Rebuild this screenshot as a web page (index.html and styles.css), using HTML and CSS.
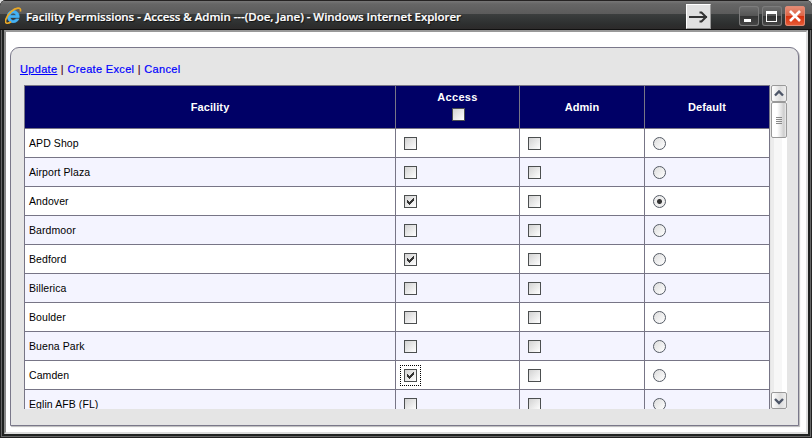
FILE: index.html
```
<!DOCTYPE html>
<html lang="en">
<head>
<meta charset="utf-8">
<title>Facility Permissions</title>
<link rel="stylesheet" href="styles.css">
</head>
<body>
<div class="window">
  <header class="titlebar">
    <svg class="ie" width="18" height="18" viewBox="0 0 18 18">
      <path d="M14.2 10.5H5.400c.2 3.200 4 3.800 5.200 1.400h3.300C11.500 17.800 2.300 16.500 2.300 9.400 2.300 1.300 14.900 1.300 14.200 10.500zM5.500 8.200h5.400C10.500 5.200 6 5.200 5.500 8.200z" fill="#45b2f5" stroke="#45b2f5" stroke-width=".7"/>
      <path d="M15.300 4.600C16.800-.6 10.500.5 6.200 4.700 1.500 9.300-.8 14.700 1.300 16c1.200.7 3.200-.2 4.800-1.300" fill="none" stroke="#e8a827" stroke-width="1.700"/>
    </svg>
    <h1>Facility Permissions - Access &amp; Admin ---(Doe, Jane) - Windows Internet Explorer</h1>
    <div class="arrow"><svg width="21" height="21" viewBox="0 0 21 21"><path d="M1 11h18M11.500 6.500h2l4.500 4.500-4.500 4.500h-2" fill="none" stroke="#333" stroke-width="2"/></svg></div>
    <div class="ctl"><svg width="20" height="20"><path d="M5 13h7v3H5z" fill="#fff"/></svg></div>
    <div class="ctl"><svg width="20" height="20"><path d="M4 5h11v11H4zM5 8v7h9V8z" fill="#fff" fill-rule="evenodd"/></svg></div>
    <div class="ctl close"><svg width="20" height="20"><path d="M5 5l10 10M15 5L5 15" stroke="#fff" stroke-width="2.600"/></svg></div>
  </header>
  <main class="client">
    <section class="panel">
      <nav class="links"><a class="on">Update</a> | <a>Create Excel</a> | <a>Cancel</a></nav>
      <div class="scroller">
        <table>
          <colgroup><col class="c1"><col class="c2"><col class="c3"><col class="c4"></colgroup>
          <thead><tr><th>Facility</th><th><span class="access">Access</span><i class="box"></i></th><th>Admin</th><th>Default</th></tr></thead>
          <tbody>
            <tr><td>APD Shop</td><td><i class="box"></i></td><td><i class="box"></i></td><td><i class="radio"></i></td></tr>
            <tr><td>Airport Plaza</td><td><i class="box"></i></td><td><i class="box"></i></td><td><i class="radio"></i></td></tr>
            <tr><td>Andover</td><td><i class="box"><svg width="11" height="11"><path class="tick" d="M2 4h1v1h1v1h1V5h1V4h1V3h1V2h1v3H8v1H7v1H6v1H5v1H4V8H3V7H2z"/></svg></i></td><td><i class="box"></i></td><td><i class="radio dot"></i></td></tr>
            <tr><td>Bardmoor</td><td><i class="box"></i></td><td><i class="box"></i></td><td><i class="radio"></i></td></tr>
            <tr><td>Bedford</td><td><i class="box"><svg width="11" height="11"><path class="tick" d="M2 4h1v1h1v1h1V5h1V4h1V3h1V2h1v3H8v1H7v1H6v1H5v1H4V8H3V7H2z"/></svg></i></td><td><i class="box"></i></td><td><i class="radio"></i></td></tr>
            <tr><td>Billerica</td><td><i class="box"></i></td><td><i class="box"></i></td><td><i class="radio"></i></td></tr>
            <tr><td>Boulder</td><td><i class="box"></i></td><td><i class="box"></i></td><td><i class="radio"></i></td></tr>
            <tr><td>Buena Park</td><td><i class="box"></i></td><td><i class="box"></i></td><td><i class="radio"></i></td></tr>
            <tr><td>Camden</td><td><i class="box focus"><svg width="11" height="11"><path class="tick" d="M2 4h1v1h1v1h1V5h1V4h1V3h1V2h1v3H8v1H7v1H6v1H5v1H4V8H3V7H2z"/></svg></i></td><td><i class="box"></i></td><td><i class="radio"></i></td></tr>
            <tr><td>Eglin AFB (FL)</td><td><i class="box"></i></td><td><i class="box"></i></td><td><i class="radio"></i></td></tr>
          </tbody>
        </table>
        <div class="scrollbar">
          <div class="sb-btn"><svg width="14" height="15"><path d="M3 9.500L7 5.500l4 4" fill="none" stroke="#4d5668" stroke-width="2.400"/></svg></div>
          <div class="thumb"><span></span><span></span><span></span><span></span></div>
          <div class="sb-btn down"><svg width="14" height="15"><path d="M3 6l4 4 4-4" fill="none" stroke="#4d5668" stroke-width="2.400"/></svg></div>
        </div>
      </div>
    </section>
  </main>
</div>
</body>
</html>
```
FILE: styles.css
```
* { box-sizing: border-box; }
body { margin: 0; background: #ddd; font-family: "Liberation Sans", Arial, sans-serif; }
.window {
  width: 812px; height: 438px; overflow: hidden; display: flex; flex-direction: column;
  background: #202221; border-radius: 6px 6px 0 0; padding: 0 4px 4px;
  box-shadow: inset 0 0 0 1px #222, inset 0 0 0 2px #666;
}
.titlebar {
  height: 30px; flex: none; margin: 0 -4px; padding: 0 7px 0 5px; display: flex; align-items: flex-start;
  background: linear-gradient(#252323 0 1px, #777 1px, #666 4px, #5b5b5b 14px, #3b3e3e 14px, #2d2f2f 24px, #2c2a2a 29px, #111 29px);
  border-radius: 6px 6px 0 0;
}
.ie { margin-top: 7px; }
h1 {
  margin: 0 auto 0 3px; font: 600 11.5px/34px "Open Sans", sans-serif; white-space: nowrap;
  color: #fff; text-shadow: 1px 1px 1px #111; letter-spacing: -.04px; -webkit-text-stroke: .2px #fff;
}
.arrow { width: 25px; height: 25px; margin: 4px 25px 0 0; padding: 1px; background: #e0e0e0; border: 1px solid; border-color: #fff #999 #999 #fff; }
.arrow svg, .ctl svg { display: block; }
.ctl {
  width: 20px; height: 20px; margin: 6px 0 0 3px; border-radius: 3px;
  background: linear-gradient(#707070, #555 48%, #333 50%, #484848); box-shadow: inset 0 0 0 1px #7c7c7c;
}
.ctl.close { background: linear-gradient(#e69079, #df6547 48%, #d62f0b 50%, #e8603b); box-shadow: inset 0 0 0 1px #de8a76; }
.client {
  flex: 1; min-height: 0; background: #fff; padding: 15px 6px 6px 4px;
  border: 2px solid; border-color: #999 #ddd #ddd #898989;
}
.panel {
  width: 789px; height: 379px; background: #e5e5e5; border: 1px solid #7a788a;
  border-radius: 9px 9px 0 0; box-shadow: 1px 1px 1px #bbb; padding: 14px 0 0 13px;
}
.links { height: 23px; margin-left: -4px; font-size: 11px; line-height: 14px; letter-spacing: .33px; color: #501030; white-space: pre; -webkit-text-stroke: .2px; }
.links a { color: #00f; }
.links .on { text-decoration: underline; }
.scroller { display: flex; width: 763px; height: 324px; overflow: hidden; gap: 1px; }
table { width: 746px; flex: none; table-layout: fixed; border-collapse: separate; border-spacing: 0; border-top: 1px solid #777586; border-left: 1px solid #777586; height: max-content; }
.c1 { width: 371px; } .c2 { width: 124px; } .c3, .c4 { width: 125px; }
th, td { border: solid #777586; border-width: 0 1px 1px 0; }
th { height: 43px; padding: 0; background: #006; color: #fff; font-size: 11px; line-height: 14px; letter-spacing: .1px; }
th .box { margin: 4px auto 3px; left: 1px; }
.access { display: block; letter-spacing: .3px; }
td { height: 29px; padding: 0 0 0 8px; background: #fff; }
td:first-child { padding-left: 4px; font-size: 10.5px; color: #000; letter-spacing: .08px; }
tr:nth-child(even) td { background: #f4f4ff; }
.box { display: block; width: 13px; height: 13px; border: 1px solid #4c4f50; background: linear-gradient(135deg, #d2d2d2, #fff); position: relative; }
.box svg { display: block; }
.tick { fill: #333; }
.focus::after { content: ""; position: absolute; inset: -5px; border: 1px dotted #000; }
.radio { display: block; width: 13px; height: 13px; border: 1px solid #555b65; border-radius: 50%; background: linear-gradient(135deg, #ddd, #fff); }
.dot { background: radial-gradient(circle, #333 0 2px, #eee 3px); }
.scrollbar { width: 16px; flex: none; display: flex; flex-direction: column; background: linear-gradient(90deg, #ececec 0 3px, #f7f7f7 3px 11px, #fff 11px); }
.sb-btn, .thumb { width: 16px; border: 1px solid #999; border-radius: 2px; background: linear-gradient(90deg, #fff, #ddd 60%, #eee); }
.sb-btn { height: 17px; }
.sb-btn svg { display: block; }
.sb-btn.down { margin-top: auto; }
.thumb { height: 36px; background: linear-gradient(90deg, #fff 0 5px, #ddd 10px, #ccc 12px, #eee); display: flex; flex-direction: column; align-items: center; justify-content: center; gap: 1px; }
.thumb span { width: 6px; height: 1px; background: #888; }
```
